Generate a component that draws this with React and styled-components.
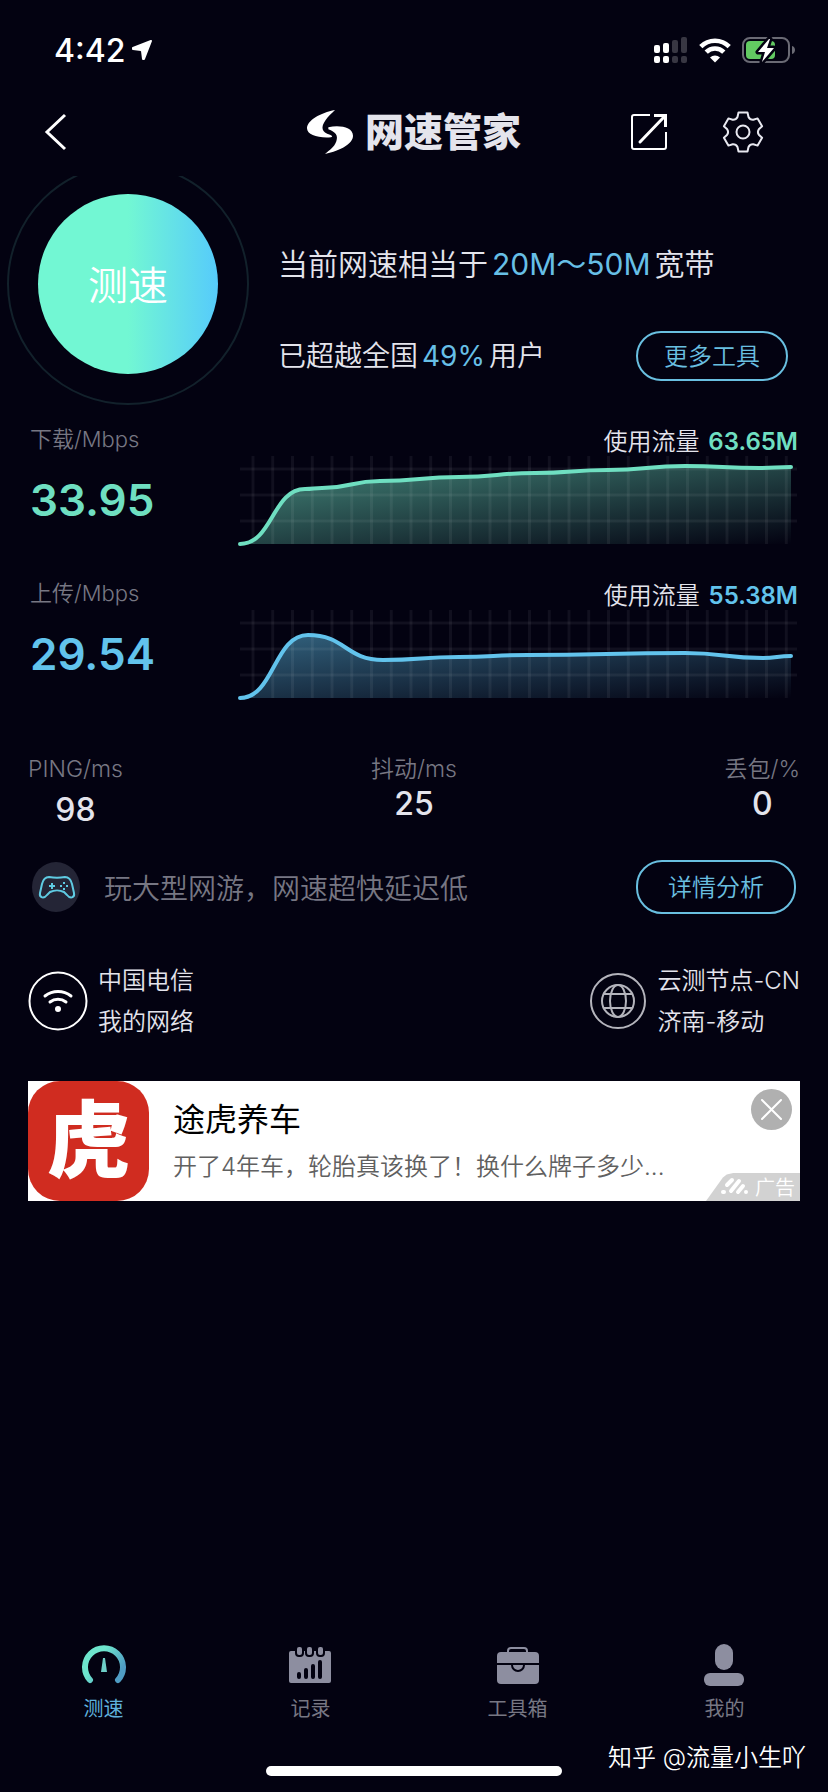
import React, { useState } from 'react';
import styled, { createGlobalStyle } from 'styled-components';

const GlobalStyle = createGlobalStyle`
  * {
    box-sizing: border-box;
  }
  body {
    margin: 0;
    background: #030211;
  }
  button {
    padding: 0;
    border: 0;
    background: none;
    color: inherit;
    font: inherit;
    cursor: pointer;
  }
`;

const Page = styled.div`
  position: relative;
  display: flex;
  flex-direction: column;
  min-height: 100vh;
  background: #030211;
  color: #e4e4ec;
  font-family: Inter, 'Noto Sans CJK SC', sans-serif;
  font-weight: 350;
`;

const StatusBar = styled.div`
  display: flex;
  align-items: center;
  height: 100px;
  padding: 0 32px 0 54px;
  color: #ffffff;
`;

const Clock = styled.span`
  flex: 1;
  display: flex;
  align-items: center;
  gap: 6px;
  font-size: 32px;
  font-weight: 500;
`;

const StatusIcons = styled.div`
  display: flex;
  align-items: center;
  gap: 11px;
`;

const Header = styled.header`
  display: grid;
  grid-template-columns: 1fr auto 1fr;
  align-items: center;
  height: 64px;
  margin-bottom: 12px;
  padding: 0 44px;
`;

const IconButton = styled.button`
  display: flex;
  justify-self: start;
`;

const Brand = styled.h1`
  display: flex;
  align-items: center;
  gap: 12px;
  margin: 0;
  font-size: 39px;
  line-height: 48px;
  font-weight: 900;
`;

const Actions = styled.div`
  display: flex;
  align-items: center;
  justify-content: flex-end;
  gap: 54px;
  padding-right: 20px;
`;

const Hero = styled.section`
  display: flex;
  height: 234px;
  padding: 0 40px 0 7px;
  overflow: hidden;
`;

const Ring = styled.div`
  display: flex;
  flex: none;
  align-items: center;
  justify-content: center;
  width: 242px;
  height: 242px;
  margin: -13px 29px 0 0;
  border: 2px solid #12212b;
  border-radius: 50%;
`;

const StartButton = styled.button`
  width: 180px;
  height: 180px;
  padding-bottom: 3px;
  border-radius: 50%;
  background: linear-gradient(90deg, #72f7d3 50%, #56cbfb);
  color: #ffffff;
  font-size: 40px;
`;

const Summary = styled.div`
  flex: 1;
  display: flex;
  flex-direction: column;
  gap: 42px;
  padding-top: 63px;
`;

const SummaryLine = styled.div`
  display: flex;
  align-items: center;
  justify-content: space-between;
  height: 50px;
  font-size: ${({ $size }) => $size}px;
  white-space: nowrap;
`;

const SummaryText = styled.span`
  padding-bottom: 4px;
`;

const Highlight = styled.span`
  margin: 0 4px;
  color: #67bfe6;
  font-weight: 400;
`;

const PillButton = styled.button`
  width: ${({ $wide }) => ($wide ? 160 : 152)}px;
  height: ${({ $wide }) => ($wide ? 54 : 50)}px;
  padding-bottom: 3px;
  border: 2px solid #69bfe0;
  border-radius: 26px;
  color: #69bfe0;
  font-size: 24px;
`;

const Meters = styled.section`
  display: flex;
  flex-direction: column;
  gap: 33px;
  margin-top: 17px;
  padding: 0 30px;
`;

const MeterHead = styled.div`
  display: flex;
  align-items: center;
  justify-content: space-between;
  height: 29px;
  padding-bottom: 5px;
  font-size: 24px;
`;

const Label = styled.span`
  color: #777783;
  font-size: ${({ $size }) => $size || 22}px;
  line-height: 28px;
`;

const Usage = styled.strong`
  margin-left: 2px;
  color: ${({ $color }) => $color};
  font-weight: 600;
`;

const MeterBody = styled.div`
  display: flex;
  height: 92px;
`;

const Speed = styled.div`
  flex: none;
  width: 208px;
  color: ${({ $color }) => $color};
  font-size: 44px;
  line-height: 88px;
  font-weight: 600;
`;

const ChartSvg = styled.svg`
  flex: 1;
  min-width: 0;
  height: 92px;
`;

const Stats = styled.section`
  display: grid;
  grid-template-columns: 1fr auto 1fr;
  min-height: 76px;
  margin-top: 53px;
  padding: 0 28px;
`;

const Stat = styled.div`
  display: flex;
  flex-direction: column;
  align-items: center;
  gap: ${({ $gap }) => $gap}px;

  &:first-child {
    justify-self: start;
  }
  &:last-child {
    justify-self: end;
  }
`;

const StatValue = styled.span`
  font-size: 32px;
  line-height: 42px;
  font-weight: 500;
`;

const Tip = styled.section`
  display: flex;
  align-items: center;
  margin-top: 29px;
  padding: 0 32px;
`;

const TipText = styled.p`
  flex: 1;
  margin: 0 0 0 23px;
  color: #777783;
  font-size: 28px;
`;

const Nodes = styled.section`
  display: flex;
  justify-content: space-between;
  margin-top: 46px;
  padding: 0 28px;
`;

const Node = styled.div`
  display: flex;
  align-items: center;
  gap: 10px;
  font-size: 24px;
  line-height: 41px;
`;

const Ad = styled.section`
  position: relative;
  display: flex;
  height: 120px;
  margin: 39px 28px 0;
  background: #ffffff;
`;

const AdLogo = styled.div`
  display: flex;
  flex: none;
  align-items: center;
  justify-content: center;
  width: 121px;
  height: 120px;
  border-radius: 32px;
  background: #d02c20;
  color: #ffffff;
  font-size: 84px;
  line-height: 120px;
  font-weight: 900;
`;

const AdText = styled.div`
  flex: 1;
  min-width: 0;
  padding: 16px 0 0 24px;
`;

const AdTitle = styled.h2`
  margin: 0;
  color: #000000;
  font-size: 32px;
  line-height: 46px;
  font-weight: 400;
`;

const AdBody = styled.p`
  margin: 0;
  color: #606060;
  font-size: 24px;
  line-height: 48px;
`;

const AdClose = styled.button`
  position: absolute;
  top: 8px;
  right: 8px;
  display: flex;
`;

const AdBadge = styled.span`
  position: absolute;
  right: 0;
  bottom: 0;
  display: flex;
  align-items: center;
  justify-content: flex-end;
  gap: 5px;
  width: 94px;
  height: 28px;
  padding: 0 5px 2px 0;
  background: #d2d2d2;
  clip-path: polygon(0 100%, 18% 16%, 22% 5%, 29% 0, 100% 0, 100% 100%);
  color: #ffffff;
  font-size: 20px;
`;

const TabBar = styled.nav`
  display: grid;
  grid-template-columns: repeat(4, 1fr);
  margin-top: auto;
`;

const Tab = styled.button`
  display: flex;
  flex-direction: column;
  align-items: center;
  gap: 10px;
  color: ${({ $active }) => ($active ? '#5fb0dc' : '#777783')};
  font-size: 20px;
  line-height: 24px;
  font-weight: 400;
`;

const HomeIndicator = styled.div`
  width: 296px;
  height: 10px;
  margin: 45px auto 16px;
  border-radius: 5px;
  background: #ffffff;
`;

const Signature = styled.span`
  position: absolute;
  right: 22px;
  bottom: 16px;
  color: #ffffff;
  font-size: 24px;
  line-height: 36px;
`;

const GREEN = '#6fdfc1';
const BLUE = '#62c3ec';

const meters = [
  {
    id: 'down',
    label: '下载/Mbps',
    speed: '33.95',
    usage: '63.65M',
    color: GREEN,
    points: [[2, 88], [67, 33], [84, 32], [142, 25], [221, 21], [297, 17], [370, 14], [447, 10], [522, 12], [553, 11]],
  },
  {
    id: 'up',
    label: '上传/Mbps',
    speed: '29.54',
    usage: '55.38M',
    color: BLUE,
    points: [[2, 88], [70, 25], [145, 50], [221, 47], [290, 45], [447, 43], [525, 48], [553, 46]],
  },
];

function curve(points) {
  return points
    .map(([x, y], i) => {
      if (i === 0) return `M${x} ${y}`;
      const [px, py] = points[i - 1];
      const mid = (px + x) / 2;
      return `C${mid} ${py} ${mid} ${y} ${x} ${y}`;
    })
    .join('');
}

const Chart = ({ id, points, color }) => {
  const line = curve(points);
  const columns = Array.from({ length: 28 }, (_, i) => 15 + i * 19.75);
  return (
    <ChartSvg viewBox="0 0 560 92" preserveAspectRatio="none" fill="none" aria-hidden="true">
      <defs>
        <linearGradient id={`fill-${id}`} x1="0" y1="0" x2="1" y2="1">
          <stop offset="0" stopColor={color} stopOpacity={id === 'up' ? 0.5 : 0.6} />
          <stop offset="1" stopColor={color} stopOpacity="0" />
        </linearGradient>
      </defs>
      <path d={`${line}V88H2Z`} fill={`url(#fill-${id})`} />
      <g stroke="#ffffff" strokeOpacity="0.06" strokeWidth="3">
        {columns.map((x) => (
          <path key={x} d={`M${x} 0V88`} />
        ))}
        <path d="M2 13H559M2 39H559M2 65H559" />
      </g>
      <path d={line} stroke={color} strokeWidth="4" strokeLinecap="round" />
    </ChartSvg>
  );
};

function gearPath() {
  const at = (deg, r) => {
    const a = (deg * Math.PI) / 180;
    return `${(21 + r * Math.sin(a)).toFixed(1)} ${(21 - r * Math.cos(a)).toFixed(1)}`;
  };
  let d = '';
  for (let k = 0; k < 6; k += 1) {
    const a = k * 60;
    d += `${k ? 'L' : 'M'}${at(a - 13, 20)}L${at(a + 13, 20)}L${at(a + 20, 16)}Q${at(a + 30, 14)} ${at(a + 40, 16)}`;
  }
  return `${d}Z`;
}

const LocationIcon = () => (
  <svg width="22" height="22" viewBox="0 0 22 22" fill="#fff" stroke="#fff" strokeWidth="2" strokeLinejoin="round">
    <path d="M20 2 2 9v1l8 1 1 1 1 8h1Z" />
  </svg>
);

const SignalIcon = () => (
  <svg width="34" height="27" viewBox="0 0 34 27">
    <g fill="#fff">
      <rect x="0" y="8" width="6" height="8" rx="2" />
      <rect x="9" y="6" width="6" height="10" rx="2" />
      <rect x="0" y="19" width="6" height="7" rx="2" />
      <rect x="9" y="19" width="6" height="7" rx="2" />
    </g>
    <g fill="#383743">
      <rect x="18" y="3" width="6" height="13" rx="2" />
      <rect x="27" y="0" width="6" height="16" rx="2" />
      <rect x="18" y="19" width="6" height="7" rx="2" />
      <rect x="27" y="19" width="6" height="7" rx="2" />
    </g>
  </svg>
);

const WifiIcon = () => (
  <svg width="32" height="25" viewBox="0 0 32 25" fill="none" stroke="#fff" strokeWidth="4.600">
    <path d="M1.800 8.600a20 20 0 0 1 28.400 0" />
    <path d="M7.200 14.200a12.400 12.400 0 0 1 17.600 0" />
    <path d="M16 24.500 11 19.500a7.200 7.200 0 0 1 10 0Z" fill="#fff" stroke="none" />
  </svg>
);

const BatteryIcon = () => (
  <svg width="54" height="28" viewBox="0 0 54 28">
    <rect x="1" y="2" width="46" height="24" rx="7" fill="none" stroke="#6a6a74" strokeWidth="2" />
    <path d="M50 10c4 1 4 7 0 8Z" fill="#6a6a74" />
    <rect x="4" y="5" width="29" height="18" rx="4" fill="#62ca62" />
    <path d="M27 3 16 16h7l-3 10 12-14h-7l3-9Z" fill="#fff" stroke="#030211" strokeWidth="5" strokeLinejoin="round" />
    <path d="M27 3 16 16h7l-3 10 12-14h-7l3-9Z" fill="#fff" />
  </svg>
);

const BackIcon = () => (
  <svg width="24" height="38" viewBox="0 0 24 38" fill="none" stroke="#fff" strokeWidth="3">
    <path d="M21 2 3 19l18 17" />
  </svg>
);

const LogoIcon = () => (
  <svg width="46" height="44" viewBox="0 0 138 132" fill="#fff">
    <path d="M84 0C40 8 0 32 0 55c0 20 34 30 72 27 6-2 4-5-3-8C44 68 40 52 56 30 64 18 74 10 84 0Z" />
    <path d="M64 52C98 44 138 52 138 77c0 24-36 44-84 55 14-12 28-20 34-38 6-18-2-28-24-36Z" />
  </svg>
);

const ShareIcon = () => (
  <svg width="38" height="38" viewBox="0 0 38 38" fill="none" stroke="#fff" strokeWidth="2">
    <path d="M20 2H4a2 2 0 0 0-2 2v30a2 2 0 0 0 2 2h30a2 2 0 0 0 2-2V19" />
    <path d="M24 2.500h11.500V14" strokeWidth="3" />
    <path d="M10 29 34 4" strokeWidth="3" strokeLinecap="round" />
  </svg>
);

const GearIcon = () => (
  <svg width="42" height="42" viewBox="0 0 42 42" fill="none" stroke="#e8e8f0" strokeWidth="2" strokeLinejoin="round">
    <path d={gearPath()} />
    <circle cx="21" cy="21" r="6.500" />
  </svg>
);

const GamepadIcon = () => (
  <svg width="49" height="50" viewBox="0 0 49 50" fill="none" stroke="#5fcbe2" strokeWidth="2">
    <ellipse cx="24" cy="25" rx="24" ry="25" fill="#242536" stroke="none" />
    <path
      d="M17 15c5 1 11 1 16 0 4 0 6 3 7 7l2 9c1 5-4 6-7 2l-3-3c-4-2-10-2-14 0l-3 3c-3 4-8 3-7-2l2-9c1-4 3-7 7-7Z"
      strokeLinejoin="round"
    />
    <path d="M20 21v6M17 24h6" />
    <path d="M32 20v2M32 26v2M28 24h2M34 24h2" />
  </svg>
);

const NetworkIcon = () => (
  <svg width="60" height="60" viewBox="0 0 60 60" fill="none" stroke="#fff">
    <circle cx="30" cy="30" r="28.500" strokeWidth="2" />
    <path d="M17 25a21 21 0 0 1 26 0M22 31a13 13 0 0 1 16 0" strokeWidth="3" strokeLinecap="round" />
    <circle cx="30" cy="38" r="3" fill="#fff" stroke="none" />
  </svg>
);

const GlobeIcon = () => (
  <svg width="58" height="58" viewBox="0 0 58 58" fill="none" stroke="#b4b4bc" strokeWidth="2">
    <circle cx="29" cy="29" r="27" />
    <circle cx="29" cy="29" r="16" />
    <ellipse cx="29" cy="29" rx="8" ry="16" />
    <path d="M15 22h28M15 36h28" />
  </svg>
);

const CloseIcon = () => (
  <svg width="41" height="41" viewBox="0 0 41 41">
    <circle cx="20.500" cy="20.500" r="20.500" fill="#b0b0b0" />
    <path d="M11 11 30 30M30 11 11 30" stroke="#fff" strokeWidth="2" strokeLinecap="round" />
  </svg>
);

const StripesIcon = () => (
  <svg width="29" height="18" viewBox="0 0 29 18" stroke="#fff" strokeWidth="4" strokeLinecap="round">
    <path d="M6 8 11 3M2 15h1M10 14 18 4M17 15 22 9M25 15h0" />
  </svg>
);

const GaugeIcon = () => (
  <svg width="44" height="44" viewBox="0 0 44 44" fill="none">
    <defs>
      <linearGradient id="gauge" x1="0" y1="0" x2="1" y2="0.600">
        <stop offset="0.400" stopColor="#6ee5cd" />
        <stop offset="1" stopColor="#4f9cc4" />
      </linearGradient>
    </defs>
    <path d="M8 37A19 19 0 1 1 36 37" stroke="url(#gauge)" strokeWidth="6" strokeLinecap="round" />
    <path d="M21 15h2l2 14h-6Z" fill="#6ecfc8" />
  </svg>
);

const RecordIcon = () => (
  <svg width="44" height="44" viewBox="0 0 44 44" fill="#8d8ea0">
    <rect x="0" y="8" width="42" height="32" rx="2" />
    <g stroke="#030211" strokeWidth="2">
      <rect x="7" y="3" width="7" height="10" rx="3" />
      <rect x="17" y="3" width="7" height="10" rx="3" />
      <rect x="28" y="3" width="7" height="10" rx="3" />
    </g>
    <path d="M10 34v-3M17 34v-7M24 34V23M31 34V19" stroke="#030211" strokeWidth="4" strokeLinecap="round" />
  </svg>
);

const ToolboxIcon = () => (
  <svg width="44" height="44" viewBox="0 0 44 44" fill="#8d8ea0">
    <path d="M12 10V8q0-3 3-3h13q3 0 3 3v2" fill="none" stroke="#8d8ea0" strokeWidth="2" />
    <rect x="1" y="9" width="42" height="32" rx="4" />
    <path d="M0 21h44M16 22a6 6 0 0 0 12 0" fill="none" stroke="#030211" strokeWidth="2" />
  </svg>
);

const UserIcon = () => (
  <svg width="44" height="44" viewBox="0 0 44 44" fill="#8d8ea0">
    <rect x="12" y="1" width="18" height="26" rx="9" />
    <rect x="1" y="30" width="40" height="13" rx="6" />
  </svg>
);

const tabs = [
  { id: 'speed', label: '测速', icon: GaugeIcon },
  { id: 'record', label: '记录', icon: RecordIcon },
  { id: 'tools', label: '工具箱', icon: ToolboxIcon },
  { id: 'mine', label: '我的', icon: UserIcon },
];

const stats = [
  { label: 'PING/ms', value: '98', gap: 6 },
  { label: '抖动/ms', value: '25', gap: 0 },
  { label: '丢包/%', value: '0', gap: 0 },
];

const App = () => {
  const [tab, setTab] = useState('speed');
  const [adOpen, setAdOpen] = useState(true);

  return (
    <>
      <GlobalStyle />
      <Page>
        <StatusBar>
          <Clock>
            4:42
            <LocationIcon />
          </Clock>
          <StatusIcons>
            <SignalIcon />
            <WifiIcon />
            <BatteryIcon />
          </StatusIcons>
        </StatusBar>

        <Header>
          <IconButton aria-label="返回">
            <BackIcon />
          </IconButton>
          <Brand>
            <LogoIcon />
            网速管家
          </Brand>
          <Actions>
            <IconButton aria-label="分享">
              <ShareIcon />
            </IconButton>
            <IconButton aria-label="设置">
              <GearIcon />
            </IconButton>
          </Actions>
        </Header>

        <Hero>
          <Ring>
            <StartButton>测速</StartButton>
          </Ring>
          <Summary>
            <SummaryLine $size={30}>
              <SummaryText>
                当前网速相当于<Highlight>20M～50M</Highlight>宽带
              </SummaryText>
            </SummaryLine>
            <SummaryLine $size={28}>
              <SummaryText>
                已超越全国<Highlight>49%</Highlight>用户
              </SummaryText>
              <PillButton>更多工具</PillButton>
            </SummaryLine>
          </Summary>
        </Hero>

        <Meters>
          {meters.map((m) => (
            <div key={m.id}>
              <MeterHead>
                <Label>{m.label}</Label>
                <span>
                  使用流量 <Usage $color={m.color}>{m.usage}</Usage>
                </span>
              </MeterHead>
              <MeterBody>
                <Speed $color={m.color}>{m.speed}</Speed>
                <Chart id={m.id} points={m.points} color={m.color} />
              </MeterBody>
            </div>
          ))}
        </Meters>

        <Stats>
          {stats.map((s) => (
            <Stat key={s.label} $gap={s.gap}>
              <Label $size={23}>{s.label}</Label>
              <StatValue>{s.value}</StatValue>
            </Stat>
          ))}
        </Stats>

        <Tip>
          <GamepadIcon />
          <TipText>玩大型网游，网速超快延迟低</TipText>
          <PillButton $wide>详情分析</PillButton>
        </Tip>

        <Nodes>
          <Node>
            <NetworkIcon />
            <div>
              中国电信
              <br />
              我的网络
            </div>
          </Node>
          <Node>
            <GlobeIcon />
            <div>
              云测节点-CN
              <br />
              济南-移动
            </div>
          </Node>
        </Nodes>

        {adOpen && (
          <Ad>
            <AdLogo>虎</AdLogo>
            <AdText>
              <AdTitle>途虎养车</AdTitle>
              <AdBody>开了4年车，轮胎真该换了！换什么牌子多少...</AdBody>
            </AdText>
            <AdClose aria-label="关闭广告" onClick={() => setAdOpen(false)}>
              <CloseIcon />
            </AdClose>
            <AdBadge>
              <StripesIcon />
              广告
            </AdBadge>
          </Ad>
        )}

        <TabBar>
          {tabs.map(({ id, label, icon: Icon }) => (
            <Tab key={id} $active={tab === id} onClick={() => setTab(id)}>
              <Icon />
              {label}
            </Tab>
          ))}
        </TabBar>
        <HomeIndicator />
        <Signature>知乎 @流量小生吖</Signature>
      </Page>
    </>
  );
};

export default App;
